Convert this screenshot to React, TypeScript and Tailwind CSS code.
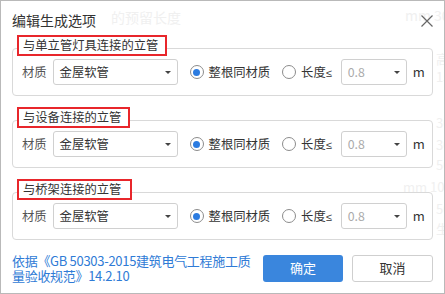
import React from 'react';

const FONT = { fontFamily: '"Noto Sans CJK SC", "Noto Sans", sans-serif' };

type Group = { title: string; legendW: string };

const groups: Group[] = [
  { title: '与单立管灯具连接的立管', legendW: 'w-[150px]' },
  { title: '与设备连接的立管', legendW: 'w-[113px]' },
  { title: '与桥架连接的立管', legendW: 'w-[115px]' },
];

// faint text of the window behind the dialog
const ghosts: { text: string; cls: string }[] = [
  { text: '的预留长度', cls: 'left-[110px] top-[6px] text-[14px]' },
  { text: 'mm 30', cls: 'left-[404px] top-[4px] text-[14px]' },
  { text: '高', cls: 'left-[435px] top-[48px] text-[13px]' },
  { text: '15', cls: 'left-[435px] top-[66px] text-[13px]' },
  { text: '30', cls: 'left-[435px] top-[112px] text-[13px]' },
  { text: '30', cls: 'left-[435px] top-[134px] text-[13px]' },
  { text: '50', cls: 'left-[435px] top-[154px] text-[13px]' },
  { text: 'mm 10', cls: 'left-[402px] top-[176px] text-[13px]' },
  { text: '50', cls: 'left-[435px] top-[198px] text-[13px]' },
  { text: '生', cls: 'left-[435px] top-[218px] text-[13px]' },
];

function Caret() {
  return <span className="w-0 h-0 border-l-[3px] border-r-[3px] border-t-[3px] border-l-transparent border-r-transparent border-t-[#444]" />;
}

function Radio({ checked }: { checked?: boolean }) {
  return (
    <span className="w-[14px] h-[14px] rounded-full border border-[#8c8c8c] bg-white flex items-center justify-center shrink-0">
      {checked && <span className="w-[7px] h-[7px] rounded-full bg-[#2b7be0]" />}
    </span>
  );
}

function GroupPanel({ g }: { g: Group }) {
  return (
    <div className="relative h-[48px] border border-[#d9d9d9] rounded-[4px] flex items-center pl-[9px] whitespace-nowrap text-[12px] text-[#333]">
      <div className={`absolute left-[4px] top-[-14px] h-[21px] ${g.legendW} border-2 border-[#e8262b] bg-white flex items-center pl-[4px] text-[12.3px] text-[#333]`}>
        {g.title}
      </div>
      <span className="shrink-0 text-[#555] text-[12.3px]">材质</span>
      <div className="shrink-0 ml-[6px] w-[125px] h-[26px] border border-[#d0d0d0] rounded-[3px] bg-white flex items-center justify-between pl-[6px] pr-[6px]">
        <span className="text-[12.3px] text-[#333]">金屋软管</span>
        <Caret />
      </div>
      <div className="shrink-0 ml-[12px] flex items-center">
        <Radio checked />
        <span className="ml-[5px] text-[12.3px] text-[#333]">整根同材质</span>
      </div>
      <div className="shrink-0 ml-[12px] flex items-center">
        <Radio />
        <span className="ml-[5px] text-[12.3px] text-[#333]">
          长度<span className="text-[11px]" style={{ fontFamily: '"Liberation Sans", sans-serif' }}>≤</span>
        </span>
      </div>
      <div className="shrink-0 ml-[9px] w-[66px] h-[26px] border border-[#d0d0d0] rounded-[3px] bg-white flex items-center justify-between pl-[6px] pr-[6px]">
        <span className="text-[12.3px] text-[#aaa]">0.8</span>
        <Caret />
      </div>
      <span className="shrink-0 ml-[6px] text-[13px] text-[#333]">m</span>
    </div>
  );
}

export default function App() {
  return (
    <div className="relative w-[445px] h-[294px] bg-white border border-[#b9b9b9] overflow-hidden" style={FONT}>
      <div className="absolute inset-0 pointer-events-none text-[#f0f0f0] whitespace-nowrap">
        {ghosts.map((t, i) => (
          <span key={i} className={`absolute ${t.cls}`}>{t.text}</span>
        ))}
      </div>

      <div className="relative px-[11px]">
        <div className="h-[39px] flex items-center justify-between">
          <h2 className="text-[14px] text-[#333]">编辑生成选项</h2>
          <svg width="14" height="14" viewBox="0 0 14 14" className="mr-[-1px]">
            <path d="M1.5 1.5 L12.5 12.5 M12.5 1.5 L1.5 12.5" stroke="#666" strokeWidth="1.2" />
          </svg>
        </div>

        <div className="mt-[8px] space-y-[24px]">
          {groups.map((g) => (
            <GroupPanel key={g.title} g={g} />
          ))}
        </div>

        <div className="mt-[13px] flex items-center justify-between">
          <p className="w-[250px] text-[13px] leading-[15px] tracking-[-0.3px] text-[#2f7bd6]">
            依据《GB 50303-2015建筑电气工程施工质量验收规范》14.2.10
          </p>
          <div className="flex gap-[9px]">
            <button className="w-[80px] h-[27px] rounded-[3px] bg-[#3a86dd] text-white text-[13px]">确定</button>
            <button className="w-[81px] h-[27px] rounded-[3px] border border-[#cfcfcf] bg-white text-[#333] text-[13px]">取消</button>
          </div>
        </div>
      </div>
    </div>
  );
}
